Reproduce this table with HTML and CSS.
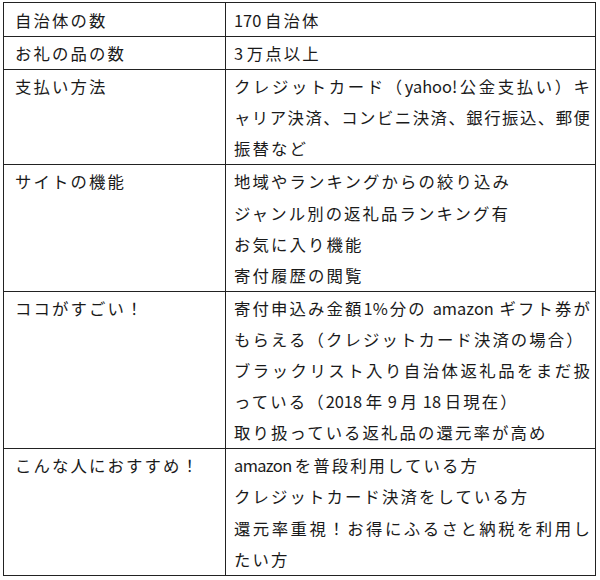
FILE: index.html
```html
<!DOCTYPE html>
<html lang="ja">
<head>
<meta charset="utf-8">
<title>ふるさと納税サイト比較</title>
<link rel="stylesheet" href="styles.css">
</head>
<body>
<table class="info">
  <tbody>
    <tr>
      <th class="label">自治体の数</th>
      <td class="value"><span class="ln"><span class="lat">170 </span>自治体</span></td>
    </tr>
    <tr>
      <th class="label">お礼の品の数</th>
      <td class="value"><span class="ln"><span class="lat">3 </span>万点以上</span></td>
    </tr>
    <tr>
      <th class="label">支払い方法</th>
      <td class="value">
        <span class="ln j">クレジットカード（<span class="lat">yahoo!</span>公金支払い）キ</span>
        <span class="ln j">ャリア決済、コンビニ決済、銀行振込、郵便</span>
        <span class="ln">振替など</span>
      </td>
    </tr>
    <tr>
      <th class="label">サイトの機能</th>
      <td class="value">
        <span class="ln">地域やランキングからの絞り込み</span>
        <span class="ln">ジャンル別の返礼品ランキング有</span>
        <span class="ln">お気に入り機能</span>
        <span class="ln">寄付履歴の閲覧</span>
      </td>
    </tr>
    <tr>
      <th class="label">ココがすごい！</th>
      <td class="value">
        <span class="ln j">寄付申込み金額<span class="lat">1%</span>分の <span class="lat">amazon</span> ギフト券が</span>
        <span class="ln">もらえる（クレジットカード決済の場合）</span>
        <span class="ln j">ブラックリスト入り自治体返礼品をまだ扱</span>
        <span class="ln">っている（<span class="lat">2018 </span>年<span class="lat"> 9 </span>月<span class="lat"> 18 </span>日現在）</span>
        <span class="ln">取り扱っている返礼品の還元率が高め</span>
      </td>
    </tr>
    <tr>
      <th class="label">こんな人におすすめ！</th>
      <td class="value">
        <span class="ln"><span class="lat narrow">amazon </span>を普段利用している方</span>
        <span class="ln">クレジットカード決済をしている方</span>
        <span class="ln j">還元率重視！お得にふるさと納税を利用し</span>
        <span class="ln">たい方</span>
      </td>
    </tr>
  </tbody>
</table>
</body>
</html>
```
FILE: styles.css
```css
html, body {
  margin: 0;
  padding: 0;
  background: #ffffff;
}

body {
  font-family: "Noto Sans CJK JP", "Noto Sans CJK SC", sans-serif;
  color: #1a1a1a;
}

.info {
  border-collapse: collapse;
  margin: 2px 0 0 3px;
  width: 593px;
  table-layout: fixed;
  border: 1px solid #222222;
}

.info th,
.info td {
  border: 1px solid #222222;
  font-size: 16.4px;
  font-weight: 400;
  letter-spacing: 2.1px;
  line-height: 31.1px;
  padding: 2px 0 0 0;
  text-align: left;
  vertical-align: top;
  white-space: nowrap;
}

.info tr + tr th,
.info tr + tr td {
  padding-top: 1px;
}

.label {
  width: 210px;
  padding-left: 11px !important;
}

.value {
  padding-left: 8px !important;
  padding-right: 5px !important;
}

.ln {
  display: block;
}

.ln.j {
  white-space: normal;
  letter-spacing: 0;
  text-align: justify;
  text-align-last: justify;
  text-justify: inter-character;
}

.lat {
  letter-spacing: 0;
}

.narrow {
  letter-spacing: -0.6px;
}
```
